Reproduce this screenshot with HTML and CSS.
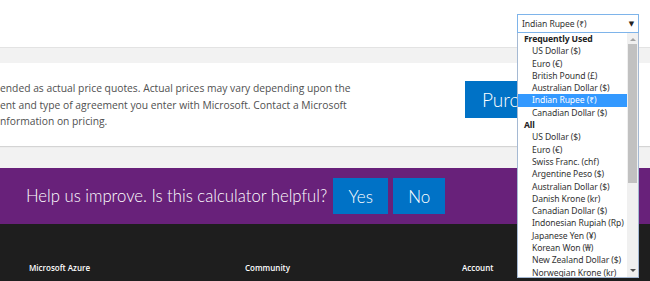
FILE: index.html
```html
<!DOCTYPE html>
<html>

<head>
    <meta charset="utf-8">
    <title>Pricing calculator</title>
    <link rel="stylesheet" href="styles.css">
</head>

<body>
    <div class="topbar"></div>

    <section class="estimate">
        <div class="card">
            <p class="disclaimer">
                ended as actual price quotes. Actual prices may vary depending upon the<br>
                ent and type of agreement you enter with Microsoft. Contact a Microsoft<br>
                nformation on pricing.
            </p>
            <button class="buy">Purchase</button>
        </div>
    </section>

    <section class="feedback">
        <span class="feedback-q">Help us improve. Is this calculator helpful?</span>
        <button class="fb-btn yes">Yes</button>
        <button class="fb-btn no">No</button>
    </section>

    <footer class="site-footer">
        <div class="footer-cols">
            <h4>Microsoft Azure</h4>
            <h4>Community</h4>
            <h4>Account</h4>
        </div>
    </footer>

    <!-- open currency dropdown, drawn over the page -->
    <div class="currency">
        <div class="currency-select">
            <span>Indian Rupee (₹)</span>
            <span class="caret">▼</span>
        </div>
        <div class="currency-list">
            <ul>
                <li class="group">Frequently Used</li>
                <li>US Dollar ($)</li>
                <li>Euro (€)</li>
                <li>British Pound (£)</li>
                <li>Australian Dollar ($)</li>
                <li class="selected">Indian Rupee (₹)</li>
                <li>Canadian Dollar ($)</li>
                <li class="group">All</li>
                <li>US Dollar ($)</li>
                <li>Euro (€)</li>
                <li>Swiss Franc. (chf)</li>
                <li>Argentine Peso ($)</li>
                <li>Australian Dollar ($)</li>
                <li>Danish Krone (kr)</li>
                <li>Canadian Dollar ($)</li>
                <li>Indonesian Rupiah (Rp)</li>
                <li>Japanese Yen (¥)</li>
                <li>Korean Won (₩)</li>
                <li>New Zealand Dollar ($)</li>
                <li>Norwegian Krone (kr)</li>
            </ul>
            <div class="scrollbar">
                <span class="arrow up"></span>
                <span class="thumb"></span>
                <span class="arrow down"></span>
            </div>
        </div>
    </div>
</body>

</html>
```

FILE: styles.css
```css
/* page base */
html,
body {
    margin: 0;
    padding: 0;
    overflow: hidden;
}

body {
    width: 650px;
    height: 281px;
    font-family: "Open Sans", "Noto Sans", sans-serif;
    background: #fff;
    position: relative;
}

/* white strip above the estimate */
.topbar {
    height: 48px;
    border-bottom: 1px solid #e3e3e3;
    box-sizing: border-box;
}

/* grey area with the card */
.estimate {
    background: #f2f2f2;
    padding: 15px 0 22px;
}

.card {
    background: #fff;
    width: 720px;
    height: 83px;
    box-sizing: border-box;
    padding-top: 17px;
    display: flex;
    align-items: flex-start;
    box-shadow: 0 1px 1px rgba(0, 0, 0, 0.12);
}

.disclaimer {
    margin: 0;
    flex: 0 0 465px;
    font-size: 10.3px;
    line-height: 16.5px;
    color: #505050;
    white-space: nowrap;
}

.buy {
    margin-top: 1px;
    height: 37px;
    padding: 0 17px;
    border: none;
    background: #0072c6;
    color: #fff;
    font-family: "Lato", "Open Sans", sans-serif;
    font-size: 19px;
    font-weight: 300;
}

/* feedback band */
.feedback {
    background: #68217a;
    height: 56px;
    padding-left: 26px;
    display: flex;
    align-items: center;
    gap: 5px;
}

.feedback-q {
    color: #fff;
    font-family: "Lato", "Open Sans", sans-serif;
    font-size: 16.7px;
    font-weight: 300;
    margin-right: 1px;
}

.fb-btn {
    height: 36px;
    border: none;
    background: #0072c6;
    color: #fff;
    font-family: "Lato", "Open Sans", sans-serif;
    font-size: 17px;
    font-weight: 300;
    padding: 0;
}

.yes {
    width: 55px;
}

.no {
    width: 52px;
}

/* footer */
.site-footer {
    background: #1e1e1e;
    height: 57px;
    padding-left: 29px;
    box-sizing: border-box;
    padding-top: 38px;
}

.footer-cols {
    display: grid;
    grid-template-columns: 216px 217px 216px;
}

.footer-cols h4 {
    margin: 0;
    color: #fff;
    font-size: 8px;
    font-weight: 600;
    line-height: 12px;
}

/* currency dropdown */
.currency {
    position: absolute;
    left: 517px;
    top: 14px;
    width: 122px;
    font-family: "Noto Sans", "DejaVu Sans", sans-serif;
    font-size: 8.6px;
    letter-spacing: -0.1px;
    color: #333;
}

.currency-select {
    height: 19px;
    box-sizing: border-box;
    border: 1px solid #7eb4ea;
    background: #fff;
    display: flex;
    align-items: center;
    justify-content: space-between;
    padding: 0 4px 0 4px;
}

.caret {
    font-size: 7px;
    color: #222;
}

.currency-list {
    height: 245px;
    box-sizing: border-box;
    border: 1px solid #a5b9d3;
    border-top: none;
    background: #fff;
    display: flex;
    overflow: hidden;
}

.currency-list ul {
    list-style: none;
    margin: 0;
    padding: 0;
    flex: 1;
}

.currency-list li {
    height: 12.3px;
    line-height: 12px;
    padding-left: 14px;
    white-space: nowrap;
    overflow: hidden;
}

.currency-list li.group {
    padding-left: 6px;
    font-weight: 700;
    color: #222;
}

.currency-list li.selected {
    background: #3399ff;
    color: #fff;
}

.scrollbar {
    width: 11px;
    background: #f0f0f0;
    display: flex;
    flex-direction: column;
    align-items: center;
}

.arrow {
    width: 0;
    height: 0;
    border-left: 3px solid transparent;
    border-right: 3px solid transparent;
}

.arrow.up {
    margin-top: 5px;
    border-bottom: 3px solid #a3a3a3;
}

.arrow.down {
    margin-top: auto;
    margin-bottom: 5px;
    border-top: 3px solid #505050;
}

.thumb {
    width: 9px;
    height: 139px;
    margin-top: 3px;
    background: #c1c1c1;
}
```
